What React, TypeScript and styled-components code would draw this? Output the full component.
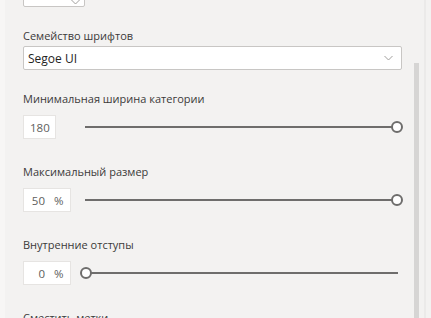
import styled, { createGlobalStyle } from "styled-components";

const GlobalStyle = createGlobalStyle`
  html, body {
    margin: 0;
    padding: 0;
    background: #f3f2f1;
  }
  body {
    font-family: "Open Sans", "Noto Sans", sans-serif;
  }
`;

const Pane = styled.div`
  display: flex;
  width: 431px;
  height: 318px;
  overflow: hidden;
  background: #f3f2f1;
`;

const Content = styled.div`
  flex: none;
  width: 402px;
  box-sizing: border-box;
  padding-left: 18px;
  border-left: 5px solid #f7f6f5;
`;

const ScrollGutter = styled.div`
  display: flex;
  width: 29px;
  padding-left: 12px;
  box-sizing: border-box;
`;

const ScrollThumb = styled.div`
  width: 5px;
  margin-top: 63px;
  background: #d6d5d4;
`;

const Edge = styled.div`
  width: 2px;
  margin-left: 5px;
  background: #ebeae9;
`;

const TopBox = styled.div`
  width: 62px;
  height: 24px;
  margin-top: -17px;
  margin-bottom: 21px;
  box-sizing: border-box;
  background: #fff;
  border: 1px solid #c8c6c4;
  border-radius: 2px;
  display: flex;
  align-items: flex-end;
  justify-content: flex-end;
  padding: 0 4px 1px 0;
`;

const Field = styled.div<{ $space: number }>`
  margin-bottom: ${(p) => p.$space}px;
`;

const Label = styled.div<{ $gap: number }>`
  font-size: 11px;
  line-height: 16px;
  color: #3b3a39;
  margin-bottom: ${(p) => p.$gap}px;
  white-space: nowrap;
`;

const Dropdown = styled.div`
  height: 24px;
  box-sizing: border-box;
  background: #fff;
  border: 1px solid #c8c6c4;
  border-radius: 2px;
  display: flex;
  align-items: center;
  justify-content: space-between;
  padding: 0 8px 0 4px;
  font-size: 12px;
  color: #252423;
`;

const SliderRow = styled.div`
  display: grid;
  grid-template-columns: 57px 323px;
  align-items: center;
`;

const NumberBox = styled.div<{ $width: number }>`
  width: ${(p) => p.$width}px;
  height: 24px;
  box-sizing: border-box;
  background: #fff;
  border: 1px solid #e6e4e2;
  display: flex;
  align-items: center;
  padding-left: 6px;
  font-size: 11.5px;
  color: #605e5c;
`;

const Value = styled.span`
  min-width: 15px;
  text-align: right;
`;

const Unit = styled.span`
  margin-left: 9px;
`;

const Track = styled.div`
  position: relative;
  height: 12px;
`;

const Line = styled.div`
  position: absolute;
  left: 5px;
  right: 5px;
  top: 5px;
  height: 2px;
  background: #6e6d6c;
`;

const Thumb = styled.div`
  position: absolute;
  top: 0;
  width: 12px;
  height: 12px;
  box-sizing: border-box;
  border: 2px solid #6e6d6c;
  border-radius: 50%;
  background: #fff;
`;

const Chevron = ({ color }: { color: string }) => (
  <svg width="9" height="6" viewBox="0 0 9 6">
    <path d="M0.5 1 L4.5 5 L8.5 1" fill="none" stroke={color} strokeWidth="1" />
  </svg>
);

interface SliderFieldProps {
  label: string;
  value: string;
  unit?: string;
  percent: number;
  width: number;
}

const SliderField = ({ label, value, unit, percent, width }: SliderFieldProps) => (
  <Field $space={25}>
    <Label $gap={8}>{label}</Label>
    <SliderRow>
      <NumberBox $width={width}>
        <Value>{value}</Value>
        {unit && <Unit>{unit}</Unit>}
      </NumberBox>
      <Track>
        <Line />
        <Thumb style={{ left: `${(percent / 100) * 311}px` }} />
      </Track>
    </SliderRow>
  </Field>
);

export default function App() {
  return (
    <>
      <GlobalStyle />
      <Pane>
        <Content>
          <TopBox>
            <Chevron color="#a19f9d" />
          </TopBox>
          <Field $space={21}>
            <Label $gap={2}>Семейство шрифтов</Label>
            <Dropdown>
              <span>Segoe UI</span>
              <Chevron color="#a19f9d" />
            </Dropdown>
          </Field>
          <SliderField label="Минимальная ширина категории" value="180" percent={100} width={33} />
          <SliderField label="Максимальный размер" value="50" unit="%" percent={100} width={48} />
          <SliderField label="Внутренние отступы" value="0" unit="%" percent={0} width={48} />
          <Field $space={0}>
            <Label $gap={8}>Сместить метки</Label>
          </Field>
        </Content>
        <ScrollGutter>
          <ScrollThumb />
          <Edge />
        </ScrollGutter>
      </Pane>
    </>
  );
}
